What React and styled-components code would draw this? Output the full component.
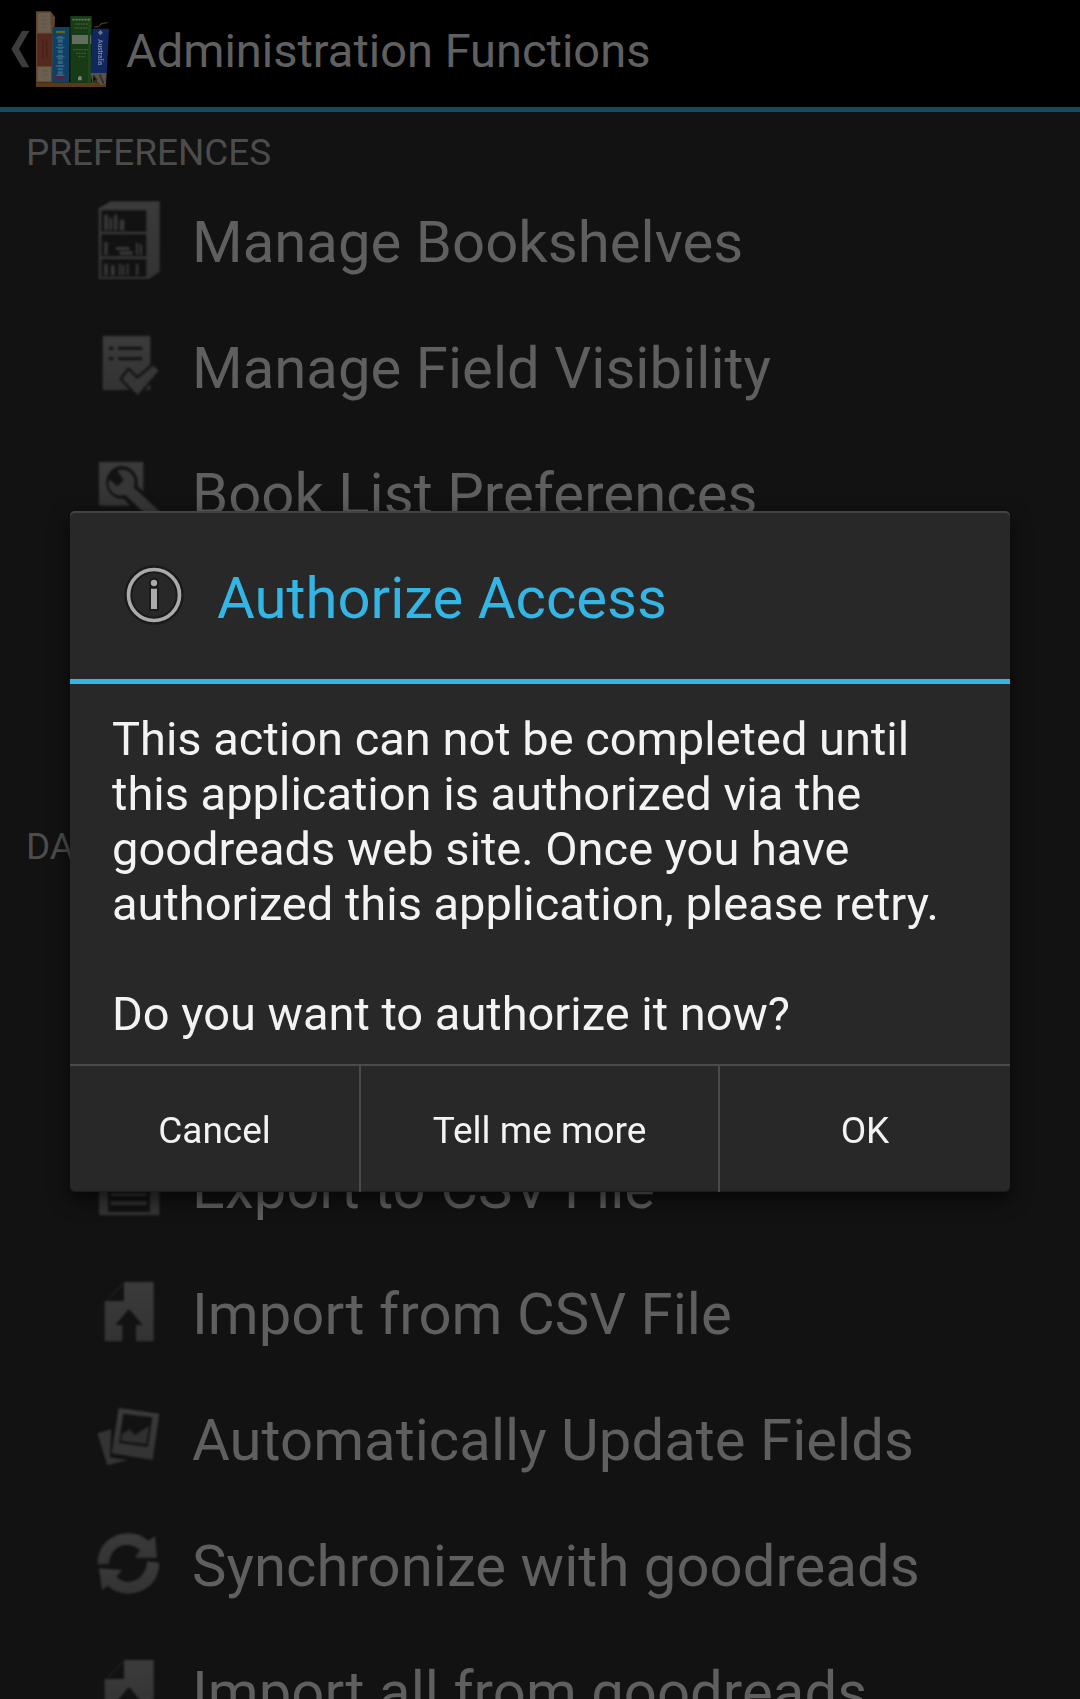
import React from "react";
import styled, { createGlobalStyle } from "styled-components";

const GlobalStyle = createGlobalStyle`
  * { box-sizing: border-box; }
  body { margin: 0; background: #121212; font-family: Roboto, "Noto Sans", sans-serif; }
`;

const Screen = styled.div`
  height: 1699px;
  overflow: hidden;
  background: #121212;
`;

const ActionBar = styled.header`
  display: flex;
  height: 112px;
  background: #000;
  border-bottom: 5px solid #144b5f;
`;

const BarTitle = styled.h1`
  margin: 0;
  padding: 23px 0 0 16px;
  font-size: 47px;
  line-height: 55px;
  font-weight: 400;
  color: #606060;
  white-space: nowrap;
`;

const SectionTitle = styled.h2`
  margin: 0;
  height: ${(p) => p.$height}px;
  padding: 0 0 0 26px;
  display: flex;
  align-items: flex-end;
  font-size: 36.9px;
  line-height: 52px;
  font-weight: 400;
  color: #4c4c4c;
`;

const List = styled.div`
  display: flex;
  flex-direction: column;
  justify-content: ${(p) => (p.$end ? "flex-end" : "flex-start")};
  height: ${(p) => p.$rows * 126}px;
`;

const Row = styled.div`
  display: flex;
  flex: 0 0 126px;
  padding-left: 90px;
  gap: 32px;
`;

const Label = styled.span`
  padding-top: 28px;
  font-size: 58px;
  line-height: 70px;
  letter-spacing: 0.05px;
  color: #5f5f5f;
  white-space: nowrap;
`;

const Overlay = styled.div`
  position: fixed;
  inset: 0;
  height: 1699px;
  display: flex;
  align-items: center;
  justify-content: center;
  padding-top: 4px;
`;

const Dialog = styled.section`
  display: flex;
  flex-direction: column;
  width: 940px;
  height: 681px;
  background: #282828;
  border-radius: 5px;
  box-shadow: inset 0 2px 0 #424242, inset 0 -1px 0 #1b1b1b,
    0 7px 20px rgba(0, 0, 0, 0.65);
`;

const DialogHeader = styled.div`
  display: flex;
  height: 173px;
  padding-left: 52px;
  border-bottom: 5px solid #33b5e5;
`;

const DialogTitle = styled.h2`
  margin: 0;
  padding: 52px 0 0 31px;
  font-size: 58px;
  line-height: 70px;
  font-weight: 400;
  color: #33b5e5;
  white-space: nowrap;
`;

const Message = styled.div`
  flex: 1;
  padding: 27px 0 0 42px;
  font-size: 47px;
  line-height: 55px;
  color: #f3f3f3;
  white-space: pre;
`;

const Buttons = styled.div`
  display: grid;
  grid-template-columns: 289px 359px 1fr;
  height: 128px;
  border-top: 2px solid #4a4a4a;
`;

const Button = styled.button`
  border: 0;
  border-left: ${(p) => (p.$divided ? "2px solid #4a4a4a" : "0")};
  background: none;
  padding: 3px 0 0 0;
  font: 400 37px/44px Roboto, "Noto Sans", sans-serif;
  color: #f3f3f3;
`;

const MarkSvg = styled.svg`
  flex: none;
  filter: blur(0.5px);
`;

const IconSvg = styled.svg`
  flex: none;
  filter: blur(0.8px);
`;

const AppMark = () => (
  <MarkSvg width="110" height="107" viewBox="0 0 330 321">
    <path d="M66 93H88L57 147L88 202H66L34 147Z" fill="#3c3c3c" />
    <path d="M108 247H318V261H108Z" fill="#573a18" />
    <path d="M108 34H152L165 52L158 247H108Z" fill="#5f452e" />
    <path d="M113 38H151L153 98H113Z" fill="#6a5d4e" />
    <path d="M111 101H157L155 198H111Z" fill="#57291c" />
    <path d="M113 201H153V244H113Z" fill="#6a5f50" />
    <path d="M122 48H143M120 60H143M124 72H142M124 82H140M126 213H143M128 224H142" stroke="#5b4e41" strokeWidth="2" />
    <path d="M129 118V178M140 122V174" stroke="#3c1d18" strokeWidth="4" strokeDasharray="5 2" />
    <path d="M158 81H209L207 247H157Z" fill="#0d4166" />
    <path d="M168 96H195" stroke="#686517" strokeWidth="7" />
    <path d="M181 108V225" stroke="#35627f" strokeWidth="15" strokeDasharray="7 3 10 4 5 3" />
    <path d="M181 112V228" stroke="#376482" strokeWidth="25" strokeDasharray="4 24" />
    <path d="M168 232H194" stroke="#5a1d3e" strokeWidth="8" />
    <path d="M211 48H275L273 249H211Z" fill="#173a17" />
    <path d="M264 52H274V248H264Z" fill="#1e4619" />
    <path d="M217 59H272" stroke="#667157" strokeWidth="5" strokeDasharray="7 2" />
    <path d="M226 72H264M224 84H262M220 149H264M228 160H260M235 170H255" stroke="#3c5a30" strokeWidth="4" strokeDasharray="6 2" />
    <path d="M216 105H264V132H216Z" fill="#656e5e" />
    <path d="M270 106H274V132H270Z" fill="#5a6554" />
    <path d="M234 241V232L240 227L245 231V241Z" fill="#7e8777" />
    <path d="M283 81Q300 81 300 73Q310 69 323 68" fill="none" stroke="#5a4e36" strokeWidth="3" />
    <path d="M277 86H327L320 220H272Z" fill="#10285e" />
    <path d="M272 219H320L318 252L302 256L290 244L278 253Z" fill="#5a4f43" />
    <path d="M280 226L290 238L280 248M299 224L311 250" stroke="#302e2d" strokeWidth="5" />
    <path d="M301 90L309 98L301 106L294 98Z" fill="#6a7695" />
    <text transform="translate(293 118) rotate(90)" fontFamily="Roboto, sans-serif" fontSize="24" fontWeight="700" fill="#7280a6" textLength="78" lengthAdjust="spacingAndGlyphs">Australia</text>
  </MarkSvg>
);

const icons = {
  shelf: {
    box: "30 -3 210 378",
    art: (
      <>
        <path fill="url(#tone)" fillRule="evenodd" d="M56 85L92 64H239V275L207 297H56ZM64 91V155H199V91ZM64 163V229H199V163ZM64 237V290H199V237Z" />
        <path fill="#383838" d="M73 104H84V151H73ZM88 113H97V151H88ZM102 104H112V151H102ZM119 119H133V151H119ZM73 186H83V225H73ZM108 201H148V210H108ZM119 214H158V224H119ZM168 188H174V224H168ZM179 192H186V224H179ZM73 251H83V286H73ZM93 256H104V286H93ZM116 251H122V286H116ZM126 255H133V286H126ZM140 251H146V286H140ZM168 251H175V286H168Z" />
      </>
    ),
  },
  visibility: {
    box: "30 15 210 378",
    art: (
      <>
        <path fill="url(#tone)" d="M68 108H211V270H68Z" />
        <path stroke="#151515" strokeWidth="10" strokeLinecap="round" d="M91 145H96M118 145H183M91 176H96M118 176H183" />
        <path fill="#363636" stroke="#131313" strokeWidth="7" strokeLinejoin="round" d="M122 237L145 206L172 232L219 192L241 211L173 290Z" />
      </>
    ),
  },
  wrench: {
    box: "30 393 210 378",
    art: (
      <>
        <path fill="url(#tone)" d="M57 486H190V617H57Z" />
        <path fill="#121212" d="M124 498A49 49 0 0 1 172 558L260 637H170L132 597A49 49 0 1 1 124 498Z" />
        <path fill="#363636" d="M112 512A37 37 0 0 1 160 562L245 640H194L135 584A36 36 0 0 1 88 538L112 559L131 541Z" />
      </>
    ),
  },
  exportFile: {
    box: "90 225 210 378",
    art: <path fill="url(#tone)" fillRule="evenodd" d="M117 315H298V496H117ZM144 340V486H270V340ZM152 360H260V370H152ZM152 394H260V404H152ZM152 429H260V438H152ZM152 454H260V465H152Z" />,
  },
  importFile: {
    box: "30 -27 210 378",
    art: (
      <>
        <path fill="url(#tone)" d="M132 66H221V244H168V195H188L147 147L106 195H127V244H74V123H132Z" />
        <path d="M82 119L129 72" stroke="#2b2b2b" strokeWidth="3" />
      </>
    ),
  },
  photos: {
    box: "30 351 210 378",
    art: (
      <>
        <path fill="#343434" d="M52 520L94 508L90 592L143 601L82 616Z" />
        <path fill="url(#tone)" fillRule="evenodd" d="M116 444L238 461L218 600L95 580ZM130 461L117 549L204 561L217 472Z" />
        <path fill="#303030" d="M126 522L149 508L164 525L207 498L199 552L123 543Z" />
      </>
    ),
  },
  sync: {
    box: "30 9 210 378",
    art: (
      <>
        <path fill="url(#tone)" d="M53 194C51 138 94 100 145 100C171 100 190 109 205 123L225 108L231 174L164 173L180 151C148 121 91 134 87 191Z" />
        <path fill="url(#tone)" d="M237 188C239 242 198 280 145 281C118 281 98 270 83 257L66 271L57 205L126 210L109 230C141 261 197 243 202 184Z" />
      </>
    ),
  },
};

const RowIcon = ({ name }) => (
  <IconSvg width="70" height="126" viewBox={icons[name].box}>
    <defs>
      <linearGradient id="tone" x1="0" y1="0" x2="0" y2="1">
        <stop offset="0" stopColor="#3b3b3b" />
        <stop offset="1" stopColor="#333333" />
      </linearGradient>
    </defs>
    {icons[name].art}
  </IconSvg>
);

const InfoIcon = () => (
  <svg width="64" height="168" viewBox="187 33 192 504">
    <circle cx="283" cy="285" r="77" fill="none" stroke="#1a1a1a" strokeWidth="24" />
    <circle cx="283" cy="285" r="76.500" fill="none" stroke="#aaa" strokeWidth="11" />
    <path d="M274 266H292V327H274Z" fill="#aaa" stroke="#1a1a1a" strokeWidth="12" paintOrder="stroke" />
    <circle cx="283" cy="249" r="9.500" fill="#aaa" stroke="#1a1a1a" strokeWidth="12" paintOrder="stroke" />
  </svg>
);

const preferences = [
  ["shelf", "Manage Bookshelves"],
  ["visibility", "Manage Field Visibility"],
  ["wrench", "Book List Preferences"],
];

const data = [
  ["exportFile", "Export to CSV File"],
  ["importFile", "Import from CSV File"],
  ["photos", "Automatically Update Fields"],
  ["sync", "Synchronize with goodreads"],
  ["importFile", "Import all from goodreads"],
];

const Rows = ({ items }) =>
  items.map(([icon, label]) => (
    <Row key={label}>
      <RowIcon name={icon} />
      <Label>{label}</Label>
    </Row>
  ));

export default function App() {
  return (
    <>
      <GlobalStyle />
      <Screen>
        <ActionBar>
          <AppMark />
          <BarTitle>Administration Functions</BarTitle>
        </ActionBar>
        <SectionTitle $height={67}>PREFERENCES</SectionTitle>
        <List $rows={5}>
          <Rows items={preferences} />
        </List>
        <SectionTitle $height={64}>DATA</SectionTitle>
        <List $rows={7} $end>
          <Rows items={data} />
        </List>
      </Screen>
      <Overlay>
        <Dialog role="dialog" aria-modal="true">
          <DialogHeader>
            <InfoIcon />
            <DialogTitle>Authorize Access</DialogTitle>
          </DialogHeader>
          <Message>
            {"This action can not be completed until\nthis application is authorized via the\ngoodreads web site. Once you have\nauthorized this application, please retry.\n\nDo you want to authorize it now?"}
          </Message>
          <Buttons>
            <Button>Cancel</Button>
            <Button $divided>Tell me more</Button>
            <Button $divided>OK</Button>
          </Buttons>
        </Dialog>
      </Overlay>
    </>
  );
}
